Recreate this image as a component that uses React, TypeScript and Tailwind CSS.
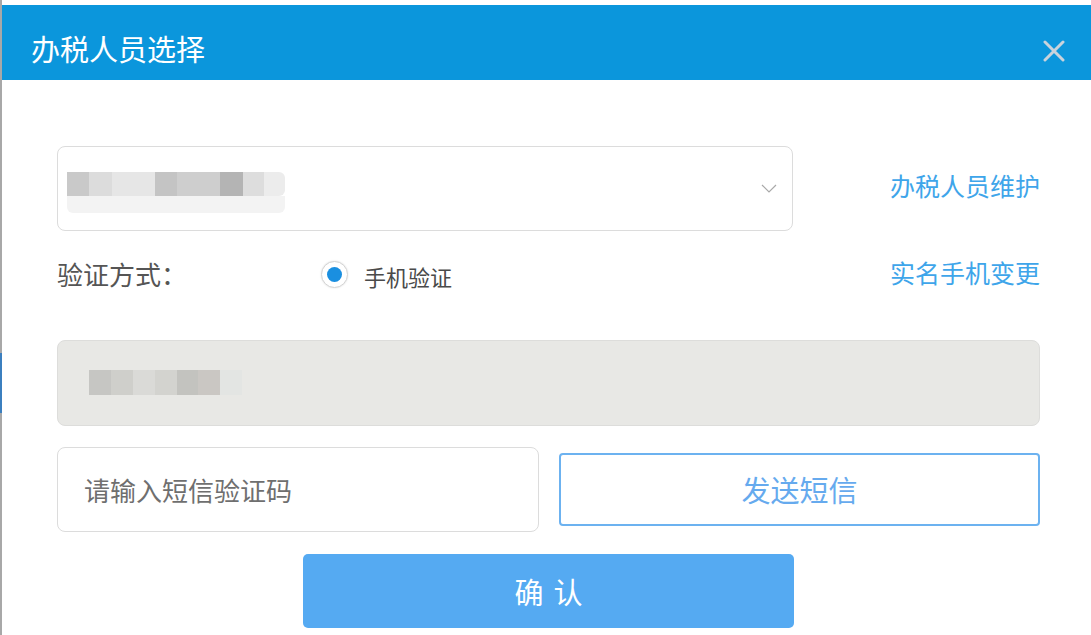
import React, { useState } from 'react';

const FONT = '"Noto Sans CJK SC", "Microsoft YaHei", sans-serif';

// mosaic blocks standing in for the blurred personal data
const SELECT_BLOCKS = [
    'w-[22px] bg-[#c9c9c9]',
    'w-[23px] bg-[#dcdcdc]',
    'w-[43px] bg-[#e6e6e6]',
    'w-[22px] bg-[#c4c4c4]',
    'w-[43px] bg-[#cecece]',
    'w-[23px] bg-[#b4b4b4]',
    'w-[21px] bg-[#dddddd]',
    'w-[21px] bg-[#ececec] rounded-r-[6px]',
];

const PHONE_BLOCKS = [
    'w-[22px] bg-[#c6c6c3]',
    'w-[22px] bg-[#cfcfcb]',
    'w-[22px] bg-[#dadad7]',
    'w-[22px] bg-[#d3d3cf]',
    'w-[21px] bg-[#c3c3bf]',
    'w-[22px] bg-[#cac7c3]',
    'w-[22px] bg-[#e3e5e3]',
];

const TaxStaffDialog: React.FC = () => {
    const [code, setCode] = useState('');

    return (
        <div className="flex min-h-[635px] w-[1091px] bg-white" style={{ fontFamily: FONT }}>
            {/* window edge behind the dialog */}
            <div className="flex w-[2px] flex-col">
                <div className="h-[353px] bg-[#a8a8a8]" />
                <div className="h-[60px] bg-[#3b7fbf]" />
                <div className="flex-1 bg-[#a8a8a8]" />
            </div>

            <div className="flex-1 pt-[5px]">
                {/* Header */}
                <div className="flex h-[75px] items-center justify-between bg-[#0b96dc] pl-[29px] pr-[26px] pt-[12px]">
                    <h2 className="text-[29px] leading-none text-white">办税人员选择</h2>
                    <button className="mt-[5px] text-[#c9d3dc]">
                        <svg width="22" height="22" viewBox="0 0 22 22">
                            <path d="M2 2 L20 20 M20 2 L2 20" stroke="currentColor" strokeWidth="3" strokeLinecap="round" />
                        </svg>
                    </button>
                </div>

                <div className="pl-[55px] pr-[51px]">
                    {/* Staff select */}
                    <div className="mt-[66px] flex items-center justify-between">
                        <div className="flex h-[85px] w-[736px] items-center justify-between rounded-[8px] border border-[#dcdcdc] pl-[9px] pr-[15px]">
                            <div className="mt-[8px] flex flex-col blur-[0.6px]">
                                <div className="flex h-[24px]">
                                    {SELECT_BLOCKS.map((c, i) => (
                                        <div key={i} className={c} />
                                    ))}
                                </div>
                                <div className="h-[17px] w-[218px] rounded-b-[6px] bg-[#f3f3f3]" />
                            </div>
                            <svg width="16" height="9" viewBox="0 0 16 9">
                                <path d="M1 1 L8 8 L15 1" fill="none" stroke="#a9a9a9" strokeWidth="1.2" />
                            </svg>
                        </div>
                        <a className="mb-[6px] text-[25px] leading-none text-[#3ea5ea]">办税人员维护</a>
                    </div>

                    {/* Verification method */}
                    <div className="mt-[23px] flex h-[40px] items-center justify-between">
                        <div className="flex items-center">
                            <span className="w-[264px] text-[26px] leading-none text-[#555555]">验证方式：</span>
                            <label className="flex items-center">
                                <span className="flex h-[27px] w-[27px] items-center justify-center rounded-full border border-[#d4d4d4] bg-white shadow-[0_0_2px_rgba(0,0,0,0.12)]">
                                    <span className="h-[15px] w-[15px] rounded-full bg-[#1a8fe0]" />
                                </span>
                                <span className="ml-[16px] mt-[3px] text-[22px] leading-none text-[#4a4a4a]">手机验证</span>
                            </label>
                        </div>
                        <a className="mb-[4px] text-[25px] leading-none text-[#3ea5ea]">实名手机变更</a>
                    </div>

                    {/* Bound phone (read only) */}
                    <div className="mt-[46px] flex h-[86px] items-start rounded-[8px] border border-[#dddddb] bg-[#e8e8e5] pl-[31px] pt-[29px]">
                        <div className="flex h-[25px] blur-[0.6px]">
                            {PHONE_BLOCKS.map((c, i) => (
                                <div key={i} className={c} />
                            ))}
                        </div>
                    </div>

                    {/* SMS code */}
                    <div className="mt-[21px] flex items-center gap-[20px]">
                        <input
                            value={code}
                            onChange={e => setCode(e.target.value)}
                            placeholder="请输入短信验证码"
                            className="h-[85px] w-[482px] rounded-[8px] border border-[#dcdcdc] pl-[26px] text-[26px] text-[#333] outline-none placeholder:text-[#6f6f6f]"
                            style={{ fontFamily: FONT }}
                        />
                        <button className="flex h-[73px] flex-1 items-center justify-center rounded-[4px] border-2 border-[#6cb2f0] text-[29px] leading-none text-[#66aaee]">
                            发送短信
                        </button>
                    </div>

                    {/* Confirm */}
                    <div className="mt-[22px] flex justify-center">
                        <button className="flex h-[74px] w-[491px] items-center justify-center rounded-[5px] bg-[#55aaf2] pl-[10px] text-[29px] leading-none tracking-[10px] text-white">
                            确认
                        </button>
                    </div>
                </div>
            </div>
        </div>
    );
};

export default TaxStaffDialog;
